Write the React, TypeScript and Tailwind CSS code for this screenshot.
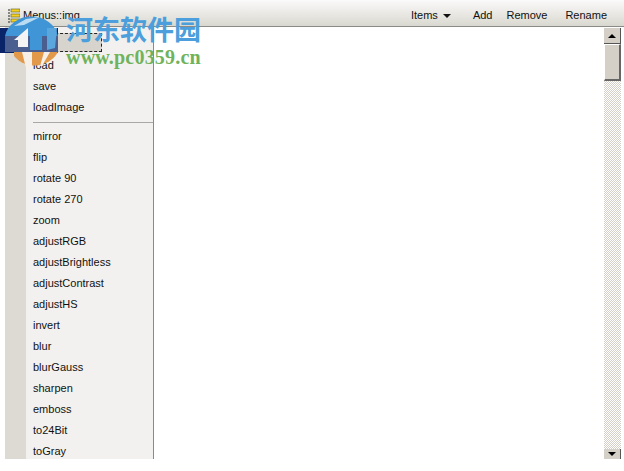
const items1 = ["load", "save", "loadImage"];
const items2 = ["mirror", "flip", "rotate 90", "rotate 270", "zoom", "adjustRGB", "adjustBrightless", "adjustContrast", "adjustHS", "invert", "blur", "blurGauss", "sharpen", "emboss", "to24Bit", "toGray"];
const ui = { fontFamily: '"Liberation Sans", sans-serif' };

function Row({ label }: { label: string }) {
  return <div className="h-[21px] flex items-center pl-[7px] text-[11px] leading-none text-[#111] whitespace-nowrap">{label}</div>;
}

function Logo() {
  return (
    <svg width="62" height="62" viewBox="0 0 62 62" className="absolute left-0 top-[10px]">
      <rect x="0" y="18" width="58" height="25" fill="#0a246a" />
      <path d="M14 42 H58 A27 27 0 0 1 14 46 Z" fill="#e2994a" />
      <path d="M22 42 H32 V58 H26 Z M44 42 H50 L42 56 H40 Z" fill="#f6f0e8" />
      <path d="M5 26 A27 24 0 0 1 58 26 Z" fill="#3f95d6" />
      <path d="M5 26 H58 V42 H5 Z" fill="#7f8fae" fillOpacity="0.55" />
      <path d="M30 18 H42 V40 H30 Z" fill="#3f95d6" />
      <path d="M47 18 L57 18 L55 38 L47 40 Z" fill="#5ba6dd" />
      <path d="M14 30 L28 18 V37 H18 V30 Z" fill="#f4f4f4" />
      <path d="M14 16 L26 9 L40 7 L24 15 Z" fill="#bcdcf2" />
    </svg>
  );
}

export default function App() {
  return (
    <div className="relative w-[624px] h-[471px] bg-white overflow-hidden" style={ui}>
      <header className="h-[27px] flex items-center justify-between pt-[5px] border-b border-[#8a8a86] bg-gradient-to-b from-[#fbfafa] to-[#d9d8d0] text-[11px] text-[#111]">
        <div className="flex items-center gap-[3px] pl-[8px]">
          <svg width="12" height="16" viewBox="0 0 12 16">
            <rect x="3" y="1" width="9" height="3" fill="#f4d020" stroke="#5a5a20" strokeWidth="0.6" />
            <rect x="3" y="6" width="9" height="3" fill="#f4d020" stroke="#5a5a20" strokeWidth="0.6" />
            <rect x="3" y="11" width="9" height="3" fill="#f4d020" stroke="#5a5a20" strokeWidth="0.6" />
            <path d="M0 2h2M0 5h2M0 8h2M0 11h2M0 14h2" stroke="#222" strokeWidth="1" />
          </svg>
          <span>Menus::img</span>
        </div>
        <div className="flex items-center pr-[17px]">
          <span>Items</span>
          <span className="ml-[5px] w-0 h-0 border-x-[4px] border-x-transparent border-t-[4px] border-t-[#111]" />
          <span className="ml-[22px]">Add</span>
          <span className="ml-[14px]">Remove</span>
          <span className="ml-[18px]">Rename</span>
        </div>
      </header>
      <div className="flex h-[432px]">
        <div className="w-[5px]" />
        <div className="w-[21px] bg-[#dcdad3]" />
        <nav className="w-[128px] bg-[#f3f1ef] border-r border-[#8a8a8a] pt-[6px] overflow-hidden">
          <div className="w-[76px] h-[19px] border border-dashed border-[#222] bg-[#d6d4cd] mb-[3px]" />
          {items1.map((i) => <Row key={i} label={i} />)}
          <div className="h-[8px] flex items-center"><div className="h-px w-full ml-[7px] bg-[#a8a8a4]" /></div>
          {items2.map((i) => <Row key={i} label={i} />)}
        </nav>
        <main className="flex-1 flex justify-end pr-[3px] pt-[1px]">
          <div className="w-[17px] flex flex-col bg-[repeating-conic-gradient(#d4d0c8_0_25%,#ffffff_0_50%)] bg-[length:2px_2px]">
            <button className="h-[16px] flex items-center justify-center bg-[#d4d0c8] border-r border-b border-[#555]">
              <span className="w-0 h-0 border-x-[4px] border-x-transparent border-b-[4px] border-b-black" />
            </button>
            <div className="h-[37px] bg-[#d4d0c8] border-r-2 border-b-2 border-[#666] border-t border-l border-t-white border-l-white" />
            <div className="flex-1" />
            <button className="h-[10px] flex items-start justify-center pt-[3px] bg-[#d4d0c8] border-r border-[#555]">
              <span className="w-0 h-0 border-x-[4px] border-x-transparent border-t-[4px] border-t-black" />
            </button>
          </div>
        </main>
      </div>
      <Logo />
      <div className="absolute left-[66px] top-[10px] text-[27px] leading-[38px] font-bold text-[#4c9fdc] whitespace-nowrap" style={{ fontFamily: '"Noto Sans CJK SC", sans-serif' }}>河东软件园</div>
      <div className="absolute left-[66px] top-[46px] text-[20px] leading-[22px] tracking-[0.2px] font-bold text-[#6fb35c] whitespace-nowrap" style={{ fontFamily: '"Liberation Serif", serif' }}>www.pc0359.cn</div>
    </div>
  );
}
